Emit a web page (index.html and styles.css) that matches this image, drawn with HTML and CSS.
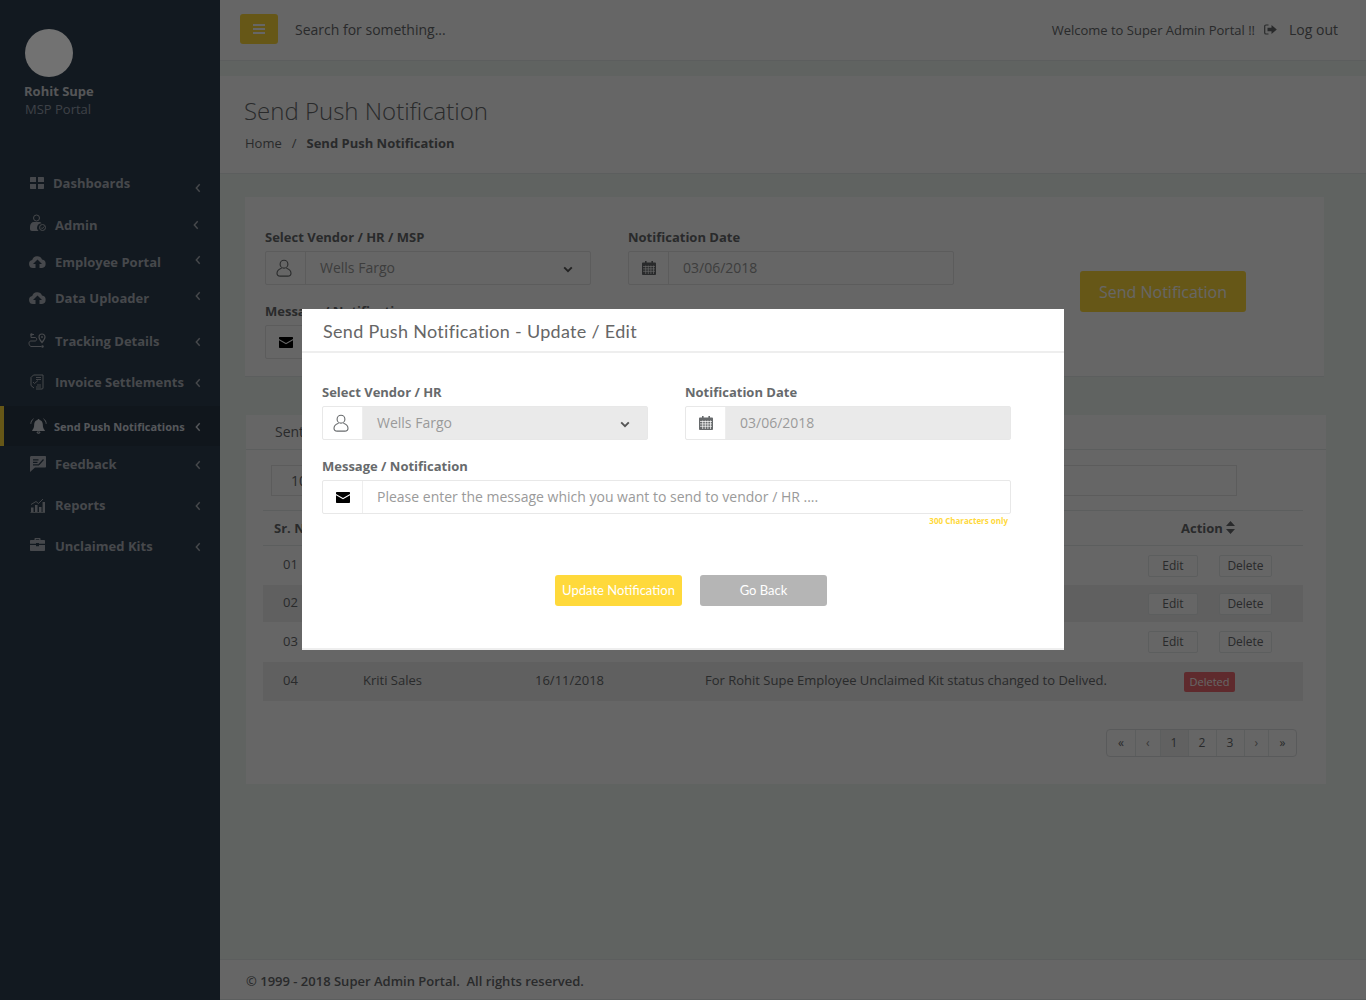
FILE: index.html
```html
<!DOCTYPE html>
<html lang="en">
<head>
  <meta charset="UTF-8">
  <title>Send Push Notification</title>
  <link rel="stylesheet" href="styles.css">
</head>
<body>

  <svg class="sprite" xmlns="http://www.w3.org/2000/svg">
    <symbol id="i-user" viewBox="0 0 16 18">
      <circle cx="8" cy="5.2" r="3.9" fill="none" stroke="currentColor" stroke-width="1.1"/>
      <path d="M5.6 9.2C2.6 10.2 1 12 1 14.2c0 1.8 1.6 2.9 3.2 2.9h7.6c1.6 0 3.2-1.1 3.2-2.9 0-2.2-1.6-4-4.6-5" fill="none" stroke="currentColor" stroke-width="1.1"/>
    </symbol>
    <symbol id="i-cal" viewBox="0 0 14 14">
      <path d="M3 0h1.6v1.6h4.8V0H11v1.6h2.2c.4 0 .8.4.8.8v10.8c0 .4-.4.8-.8.8H.8c-.4 0-.8-.4-.8-.8V2.400c0-.4.4-.8.8-.8H3z" fill="currentColor"/>
      <path d="M1 5.500h12M1 7.900h12M1 10.300h12M3.700 4.500v8.500M6.300 4.500v8.500M8.900 4.500v8.500M11.500 4.500v8.500" stroke="#fff" stroke-width=".7"/>
    </symbol>
    <symbol id="i-mail" viewBox="0 0 14 11">
      <path d="M1 0h12c.6 0 1 .4 1 1v.9L7 6 0 1.900V1c0-.6.4-1 1-1z" fill="currentColor"/>
      <path d="M0 3.200 7 7.300l7-4.100V10c0 .6-.4 1-1 1H1c-.6 0-1-.4-1-1z" fill="currentColor"/>
    </symbol>
    <symbol id="i-down" viewBox="0 0 10 7">
      <path d="M1.200 1.400 5 5.200l3.800-3.800" fill="none" stroke="currentColor" stroke-width="1.900"/>
    </symbol>
    <symbol id="i-left" viewBox="0 0 6 10">
      <path d="M4.700 1.200 1.300 5l3.400 3.800" fill="none" stroke="currentColor" stroke-width="1.400"/>
    </symbol>
    <symbol id="i-bars" viewBox="0 0 12 10">
      <path d="M0 0h12v2H0zM0 4h12v2H0zM0 8h12v2H0z" fill="currentColor"/>
    </symbol>
    <symbol id="i-logout" viewBox="0 0 13 11">
      <path d="M4.500 1H2C1.200 1 .7 1.600.7 2.300v6.400C.7 9.400 1.200 10 2 10h2.500" fill="none" stroke="currentColor" stroke-width="1.200"/>
      <path d="M3.500 3.800h4V1l5.300 4.500L7.500 10V7.200h-4z" fill="currentColor"/>
    </symbol>
    <symbol id="i-sort" viewBox="0 0 9 13">
      <path d="M4.500 0 9 5H0zM4.500 13 0 8h9z" fill="currentColor"/>
    </symbol>
    <symbol id="i-dash" viewBox="0 0 14 12">
      <path d="M0 1c0-.6.4-1 1-1h5v5H0zM8 0h5c.6 0 1 .4 1 1v4H8zM0 7h6v5H1c-.6 0-1-.4-1-1zM8 7h6v4c0 .6-.4 1-1 1H8z" fill="currentColor"/>
    </symbol>
    <symbol id="i-admin" viewBox="0 0 16 18">
      <circle cx="6.500" cy="4" r="3" fill="none" stroke="currentColor" stroke-width="1"/>
      <path d="M0 13c0-3 1.500-5 4-5h5c1 0 2 .4 2.600 1.200A4.500 4.500 0 0 0 8.500 17H2c-1.200 0-2-.8-2-2z" fill="currentColor"/>
      <circle cx="12.500" cy="13.500" r="3" fill="none" stroke="currentColor" stroke-width="1"/>
      <path d="m11 13.500 1.200 1.200 2-2.200" fill="none" stroke="currentColor" stroke-width="1"/>
    </symbol>
    <symbol id="i-cloud" viewBox="0 0 17 12">
      <path fill-rule="evenodd" d="M4 12a4 4 0 0 1-.8-7.900A5.200 5.200 0 0 1 13 3.500 4.300 4.300 0 0 1 13 12h-2.500V8H13L8.500 3.500 4 8h2.500v4z" fill="currentColor"/>
    </symbol>
    <symbol id="i-track" viewBox="0 0 18 16">
      <path d="M14 1a3 3 0 0 0-3 3c0 2 3 5.500 3 5.500S17 6 17 4a3 3 0 0 0-3-3z" fill="none" stroke="currentColor" stroke-width="1.200"/>
      <circle cx="14" cy="4" r=".9" fill="currentColor"/>
      <path d="M3 1.500h3M3 1.500v3h4c1 0 1.700.8 1.700 1.800S8 8 7 8H3c-1.300 0-2 1-2 2.300S2 13.500 3 13.500h10" fill="none" stroke="currentColor" stroke-width="1"/>
      <circle cx="14.500" cy="13.500" r="1.200" fill="currentColor"/>
      <circle cx="3.500" cy="1.500" r="1.200" fill="currentColor"/>
    </symbol>
    <symbol id="i-invoice" viewBox="0 0 14 16">
      <path d="M3.500 1h9.500v13c0 .6-.4 1-1 1H6M3.500 1 1 3.500v8L4 14" fill="none" stroke="currentColor" stroke-width="1"/>
      <path d="M6 3.500h5M6 5.500h5M3 8l1.500 1.500L8 6.500M7 11h4M6 13h5" fill="none" stroke="currentColor" stroke-width=".9"/>
    </symbol>
    <symbol id="i-bell" viewBox="0 0 17 16">
      <path d="M8.500 1c.6 0 1 .4 1 .9C11.600 2.400 12.800 4 12.800 6.500c0 3 .8 4.500 2 5.700v.8H2.200v-.8c1.200-1.200 2-2.700 2-5.700C4.200 4 5.400 2.400 7.500 1.900c0-.5.4-.9 1-.9z" fill="currentColor"/>
      <path d="M7 14h3a1.500 1.500 0 0 1-3 0zM3.500.8C1.800 2 .9 3.800.8 5.800M13.500.8c1.700 1.200 2.600 3 2.700 5" fill="none" stroke="currentColor" stroke-width=".9"/>
    </symbol>
    <symbol id="i-feedback" viewBox="0 0 16 16">
      <path d="M0 1.500C0 .7.600 0 1.400 0H15c.6 0 1 .4 1 1v9.500c0 .6-.4 1-1 1H5L0 16z" fill="currentColor"/>
      <path d="M3 3.800h5.500M3 6.300h4.500M3 8.800h6M9 8.500l4.500-5" fill="none" stroke="#2f4050" stroke-width="1.200"/>
    </symbol>
    <symbol id="i-reports" viewBox="0 0 15 15">
      <path d="M1 9.500h2.500V14H1zM5 7h2.500v7H5zM9 9h2.500v5H9zM12.600 4H15v10h-2.400z" fill="currentColor"/>
      <path d="M1 6.500 6 3.500l2.500 2L13 1" fill="none" stroke="currentColor" stroke-width=".9"/>
      <path d="M.5 14.500h14.500" stroke="currentColor" stroke-width=".8"/>
    </symbol>
    <symbol id="i-kit" viewBox="0 0 15 13">
      <path d="M4.500 2V1c0-.6.4-1 1-1h4c.6 0 1 .4 1 1v1H14c.6 0 1 .4 1 1v2.800H9V5H6v.8H0V3c0-.6.4-1 1-1zM5.800 2h3.400v-.8H5.800z" fill="currentColor"/>
      <path d="M0 7h6v1.200h3V7h6v5c0 .6-.4 1-1 1H1c-.6 0-1-.4-1-1z" fill="currentColor"/>
    </symbol>
  </svg>

  <div class="app">
    <aside class="sidebar">
      <div class="profile">
        <div class="avatar"></div>
        <div class="profile-name">Rohit Supe</div>
        <div class="profile-role">MSP Portal</div>
      </div>
      <nav class="side-nav">
        <a class="nav-item"><svg class="nav-icon dash"><use href="#i-dash"/></svg><span>Dashboards</span><svg class="chev chev-low"><use href="#i-left"/></svg></a>
        <a class="nav-item"><svg class="nav-icon admin"><use href="#i-admin"/></svg><span>Admin</span><svg class="chev chev-in"><use href="#i-left"/></svg></a>
        <a class="nav-item"><svg class="nav-icon cloud"><use href="#i-cloud"/></svg><span>Employee Portal</span><svg class="chev chev-high"><use href="#i-left"/></svg></a>
        <a class="nav-item"><svg class="nav-icon cloud"><use href="#i-cloud"/></svg><span>Data Uploader</span><svg class="chev chev-high"><use href="#i-left"/></svg></a>
        <a class="nav-item"><svg class="nav-icon track"><use href="#i-track"/></svg><span>Tracking Details</span><svg class="chev"><use href="#i-left"/></svg></a>
        <a class="nav-item"><svg class="nav-icon invoice"><use href="#i-invoice"/></svg><span>Invoice Settlements</span><svg class="chev"><use href="#i-left"/></svg></a>
        <a class="nav-item active"><svg class="nav-icon bell"><use href="#i-bell"/></svg><span>Send Push Notifications</span><svg class="chev"><use href="#i-left"/></svg></a>
        <a class="nav-item"><svg class="nav-icon feedback"><use href="#i-feedback"/></svg><span>Feedback</span><svg class="chev"><use href="#i-left"/></svg></a>
        <a class="nav-item"><svg class="nav-icon reports"><use href="#i-reports"/></svg><span>Reports</span><svg class="chev"><use href="#i-left"/></svg></a>
        <a class="nav-item"><svg class="nav-icon kit"><use href="#i-kit"/></svg><span>Unclaimed Kits</span><svg class="chev"><use href="#i-left"/></svg></a>
      </nav>
    </aside>

    <main class="main">
      <header class="topbar">
        <button class="menu-btn"><svg class="bars"><use href="#i-bars"/></svg></button>
        <span class="search">Search for something...</span>
        <span class="welcome">Welcome to Super Admin Portal !!</span>
        <svg class="logout-icon"><use href="#i-logout"/></svg>
        <a class="logout">Log out</a>
      </header>

      <section class="page-heading">
        <h2>Send Push Notification</h2>
        <div class="breadcrumb">
          <span>Home</span><span class="sep">/</span><strong>Send Push Notification</strong>
        </div>
      </section>

      <section class="card form-card">
        <div class="form-grid">
          <div class="field">
            <label>Select Vendor / HR / MSP</label>
            <div class="input-group">
              <span class="addon"><svg class="ic-user"><use href="#i-user"/></svg></span>
              <span class="control">Wells Fargo<svg class="ic-down"><use href="#i-down"/></svg></span>
            </div>
          </div>
          <div class="field">
            <label>Notification Date</label>
            <div class="input-group">
              <span class="addon"><svg class="ic-cal"><use href="#i-cal"/></svg></span>
              <span class="control">03/06/2018</span>
            </div>
          </div>
          <button class="send-btn">Send Notification</button>
          <div class="field field-wide">
            <label>Message / Notification</label>
            <div class="input-group">
              <span class="addon"><svg class="ic-mail"><use href="#i-mail"/></svg></span>
              <span class="control"></span>
            </div>
          </div>
        </div>
      </section>

      <section class="card list-card">
        <div class="list-title">Sent Items</div>
        <div class="list-filters">
          <span class="page-size">10</span>
          <span class="filter-search"></span>
        </div>
        <table class="list-table">
          <thead>
            <tr><th>Sr. No</th><th></th><th></th><th></th><th class="action-head">Action <svg class="ic-sort"><use href="#i-sort"/></svg></th></tr>
          </thead>
          <tbody>
            <tr>
              <td>01</td><td></td><td></td><td></td>
              <td class="actions"><a class="btn-sm">Edit</a><a class="btn-sm">Delete</a></td>
            </tr>
            <tr>
              <td>02</td><td></td><td></td><td></td>
              <td class="actions"><a class="btn-sm">Edit</a><a class="btn-sm">Delete</a></td>
            </tr>
            <tr>
              <td>03</td><td></td><td></td><td></td>
              <td class="actions"><a class="btn-sm">Edit</a><a class="btn-sm">Delete</a></td>
            </tr>
            <tr>
              <td>04</td><td>Kriti Sales</td><td>16/11/2018</td>
              <td>For Rohit Supe Employee Unclaimed Kit status changed to Delived.</td>
              <td class="actions"><span class="badge-deleted">Deleted</span></td>
            </tr>
          </tbody>
        </table>
        <div class="pager-wrap">
          <div class="pager">
            <a class="wide">«</a><a class="narrow">‹</a><a class="wide current">1</a><a class="wide">2</a><a class="wide">3</a><a class="narrow">›</a><a class="wide">»</a>
          </div>
        </div>
      </section>

      <footer class="footer">© 1999 - 2018 Super Admin Portal.&nbsp; All rights reserved.</footer>
    </main>
  </div>

  <!-- Update dialog, open over the dimmed page -->
  <div class="backdrop">
    <div class="modal">
      <div class="modal-head">Send Push Notification - Update / Edit</div>
      <div class="modal-body">
        <div class="modal-grid">
          <div class="field">
            <label>Select Vendor / HR</label>
            <div class="input-group">
              <span class="addon"><svg class="ic-user"><use href="#i-user"/></svg></span>
              <span class="control disabled">Wells Fargo<svg class="ic-down"><use href="#i-down"/></svg></span>
            </div>
          </div>
          <div class="field">
            <label>Notification Date</label>
            <div class="input-group">
              <span class="addon"><svg class="ic-cal"><use href="#i-cal"/></svg></span>
              <span class="control disabled">03/06/2018</span>
            </div>
          </div>
          <div class="field field-wide">
            <label>Message / Notification</label>
            <div class="input-group">
              <span class="addon"><svg class="ic-mail"><use href="#i-mail"/></svg></span>
              <span class="control">Please enter the message which you want to send to vendor / HR ....</span>
            </div>
            <div class="char-hint">300 Characters only</div>
          </div>
        </div>
        <div class="modal-actions">
          <button class="modal-btn primary">Update Notification</button>
          <button class="modal-btn muted">Go Back</button>
        </div>
      </div>
    </div>
  </div>

</body>
</html>
```

FILE: styles.css
```css
* {
  box-sizing: border-box;
}
body {
  margin: 0;
  font-family: "Open Sans", "Noto Sans", sans-serif;
  font-size: 13px;
  color: #676a6c;
  background-color: #f0f7f3;
  overflow: hidden;
}
.sprite {
  display: none;
}
svg {
  display: block;
}
.app {
  display: flex;
  height: 1000px;
}

/* Sidebar */
.sidebar {
  width: 220px;
  flex-shrink: 0;
  background-color: #2f4050;
  color: #b0b5bd;
}
.profile {
  height: 162px;
  padding: 29px 0 0 25px;
}
/* the picture sits a little above the dimming layer */
.avatar {
  width: 48px;
  height: 48px;
  border-radius: 50%;
  background-color: #727272;
  position: relative;
  z-index: 20;
}
.profile-name {
  margin-top: 5px;
  font-size: 13px;
  line-height: 18px;
  font-weight: 700;
  color: #d5d7db;
  margin-left: -1px;
}
.profile-role {
  font-size: 13px;
  line-height: 18px;
  color: #9aa3b2;
}
.side-nav {
  display: grid;
  grid-template-rows: 42px 42px 32px 40px 46px 36px 46px 36px 46px 36px;
}
.nav-item {
  display: flex;
  align-items: center;
  padding-left: 30px;
  font-weight: 700;
  font-size: 13px;
}
.nav-item span {
  flex: 1;
  white-space: nowrap;
}
.nav-item.active {
  margin-top: 6px;
  background-color: #293846;
  border-left: 4px solid #ffd93b;
  padding-left: 26px;
  font-size: 11px;
  color: #d5dae2;
}
.nav-icon {
  flex-shrink: 0;
  margin-right: 10px;
}
.nav-icon.dash { width: 14px; height: 12px; margin-right: 9px; }
.nav-icon.admin { width: 16px; height: 18px; margin-right: 9px; margin-top: -4px; }
.nav-icon.cloud { width: 17px; height: 12px; margin-left: -1px; margin-right: 9px; }
.nav-icon.track { width: 18px; height: 16px; margin-left: -2px; margin-right: 9px; }
.nav-icon.invoice { width: 14px; height: 16px; margin-right: 11px; }
.nav-icon.bell { width: 17px; height: 16px; margin-right: 7px; }
.nav-icon.feedback { width: 16px; height: 16px; margin-right: 9px; }
.nav-icon.reports { width: 15px; height: 15px; margin-right: 10px; }
.nav-icon.kit { width: 15px; height: 13px; margin-right: 10px; margin-top: -3px; }
.chev {
  width: 6px;
  height: 10px;
  margin-right: 19px;
  flex-shrink: 0;
  margin-top: 2px;
}
.chev-low { margin-top: 10px; }
.chev-high { margin-top: -4px; }
.chev-in { margin-right: 21px; margin-top: 0; }

/* Top bar */
.main {
  flex: 1;
  min-width: 0;
  display: flex;
  flex-direction: column;
}
.topbar {
  height: 61px;
  flex-shrink: 0;
  display: flex;
  align-items: center;
  padding: 0 28px 2px 20px;
  background-color: #fff;
  border-bottom: 1px solid #e7eaec;
}
.menu-btn {
  width: 38px;
  height: 30px;
  border: none;
  border-radius: 3px;
  background-color: #ffd93b;
  color: #fff;
  display: flex;
  align-items: center;
  justify-content: center;
  padding: 0;
}
.bars {
  width: 12px;
  height: 10px;
}
.search {
  margin-left: 17px;
  font-size: 14px;
  flex: 1;
}
.welcome {
  font-size: 13px;
  margin-top: 1px;
}
.logout-icon {
  width: 13px;
  height: 11px;
  margin-left: 9px;
}
.logout {
  margin-left: 12px;
  font-size: 14px;
}

/* Page heading */
.page-heading {
  margin-top: 15px;
  height: 98px;
  flex-shrink: 0;
  padding: 19px 24px 0;
  background-color: #fff;
  border-bottom: 1px solid #e7eaec;
}
.page-heading h2 {
  margin: 0;
  font-size: 24px;
  line-height: 32px;
  font-weight: 300;
}
.breadcrumb {
  margin-top: 7px;
  margin-left: 1px;
  line-height: 18px;
}
.breadcrumb .sep {
  margin: 0 10px;
}

/* Cards */
.card {
  background-color: #fff;
  flex-shrink: 0;
}
.form-card {
  margin: 23px 42px 0 25px;
  height: 180px;
  padding: 31px 20px 0;
  border-bottom: 1px solid #e7eaec;
}
.form-grid {
  display: grid;
  grid-template-columns: 326px 326px auto;
  column-gap: 37px;
  row-gap: 17px;
}
.field-wide {
  grid-column: 1 / span 2;
}
.field label {
  display: block;
  font-weight: 700;
  font-size: 13px;
  line-height: 18px;
  margin-bottom: 5px;
}
.input-group {
  display: flex;
  height: 34px;
  border: 1px solid #e5e6e7;
  border-radius: 2px;
}
.addon {
  width: 40px;
  flex-shrink: 0;
  display: flex;
  align-items: center;
  justify-content: center;
  border-right: 1px solid #e5e6e7;
  color: #676a6c;
}
.control {
  flex: 1;
  display: flex;
  align-items: center;
  justify-content: space-between;
  padding: 0 17px 2px 14px;
  font-size: 14px;
  color: #9a9a9a;
  white-space: nowrap;
}
.control.disabled {
  background-color: #eaeaea;
}
.ic-user { width: 16px; height: 18px; margin-right: 3px; }
.ic-cal { width: 14px; height: 14px; }
.ic-mail { width: 14px; height: 11px; color: #000; }
.ic-down { width: 10px; height: 7px; color: #555; margin-top: 4px; }
.send-btn {
  grid-column: 3;
  grid-row: 1 / span 2;
  justify-self: start;
  align-self: start;
  margin: 43px 0 0 89px;
  width: 166px;
  height: 41px;
  border: none;
  border-radius: 3px;
  background-color: #ffd93b;
  color: #ffffff;
  font-family: inherit;
  font-size: 16px;
}
.list-card {
  margin: 38px 40px 0 26px;
  height: 369px;
}
.list-title {
  height: 35px;
  padding: 0 29px;
  line-height: 34px;
  font-size: 14px;
  border-bottom: 1px solid #e7eaec;
}
.list-filters {
  display: flex;
  justify-content: space-between;
  margin: 15px 89px 0 25px;
  height: 31px;
}
.page-size {
  width: 60px;
  border: 1px solid #e5e6e7;
  padding-left: 19px;
  font-size: 14px;
  line-height: 29px;
}
.filter-search {
  width: 400px;
  border: 1px solid #e5e6e7;
}

/* Table */
.list-table {
  margin: 14px 0 0 17px;
  width: 1040px;
  table-layout: fixed;
  border-collapse: collapse;
}
.list-table th:nth-child(1) { width: 80px; }
.list-table th:nth-child(2) { width: 172px; }
.list-table th:nth-child(3) { width: 170px; }
.list-table th:nth-child(4) { width: 440px; }
.list-table th {
  height: 35px;
  text-align: left;
  padding: 0 0 0 11px;
  font-size: 13px;
  white-space: nowrap;
  border-top: 1px solid #e7eaec;
  border-bottom: 1px solid #e7eaec;
}
.list-table th.action-head {
  padding-left: 56px;
}
.ic-sort {
  display: inline-block;
  width: 9px;
  height: 13px;
  vertical-align: -1px;
}
.list-table td {
  height: 39px;
  padding: 0 0 2px 20px;
  font-size: 13px;
  white-space: nowrap;
}
.list-table tbody tr:nth-child(2) td {
  height: 37px;
}
.list-table tbody tr:nth-child(3) td {
  height: 40px;
}
.list-table tbody tr:nth-child(even) {
  background-color: #efefef;
}
.list-table td.actions {
  padding-left: 23px;
}
.btn-sm {
  display: inline-block;
  height: 22px;
  width: 50px;
  margin-right: 21px;
  margin-top: 3px;
  line-height: 20px;
  text-align: center;
  font-size: 12px;
  border: 1px solid #e7eaec;
  border-radius: 2px;
  background-color: #fff;
  vertical-align: middle;
}
.btn-sm + .btn-sm {
  width: 53px;
  margin-right: 0;
}
.badge-deleted {
  display: inline-block;
  margin-left: 36px;
  margin-top: 3px;
  width: 51px;
  height: 20px;
  line-height: 20px;
  text-align: center;
  font-size: 11px;
  border-radius: 2px;
  background-color: #ed6a70;
  color: #ffffff;
  vertical-align: middle;
}
.pager-wrap {
  display: flex;
  justify-content: flex-end;
  margin: 28px 29px 0 0;
}
.pager {
  display: flex;
  height: 28px;
  border: 1px solid #dfe1e3;
  border-radius: 4px;
}
.pager a {
  display: flex;
  align-items: center;
  justify-content: center;
  font-size: 12px;
  border-left: 1px solid #e7eaec;
}
.pager a:first-child {
  border-left: none;
}
.pager .wide { width: 28px; }
.pager .narrow { width: 24.5px; color: #8c8c8c; }
.pager .current { background-color: #f3f3f3; }

/* Footer */
.footer {
  margin-top: auto;
  height: 41px;
  flex-shrink: 0;
  padding: 0 26px;
  line-height: 42px;
  font-size: 13px;
  font-weight: 600;
  background-color: #fff;
  border-top: 1px solid #e7eaec;
  border-bottom: 1px solid #e7eaec;
}

/* Dialog */
.backdrop {
  position: fixed;
  inset: 0;
  z-index: 10;
  background-color: rgba(0, 0, 0, .6);
}
.modal {
  width: 762px;
  height: 341px;
  margin: 309px auto 0;
  background-color: #fff;
  border-bottom: 2px solid #eeeeee;
}
.modal-head {
  height: 44px;
  padding: 0 21px;
  line-height: 44px;
  font-family: Lato, "Noto Sans", sans-serif;
  font-size: 18px;
  letter-spacing: .3px;
  color: #666666;
  border-bottom: 2px solid #eeeeee;
}
.modal-body {
  padding: 30px 20px 0;
}
.modal-grid {
  display: grid;
  grid-template-columns: 326px 326px;
  column-gap: 37px;
  row-gap: 17px;
}
.modal .addon {
  border-right: 1px solid #eeeeee;
}
.modal .input-group {
  border-color: #e8e8e8;
}
.char-hint {
  margin: 2px 3px 0 0;
  text-align: right;
  font-size: 8px;
  line-height: 10px;
  font-weight: 700;
  color: #ffd93b;
}
.modal-actions {
  display: flex;
  justify-content: center;
  gap: 18px;
  margin-top: 49px;
  margin-left: 16px;
}
.modal-btn {
  width: 127px;
  height: 31px;
  border: none;
  border-radius: 3px;
  padding: 0 0 1px;
  font-family: Lato, "Noto Sans", sans-serif;
  font-size: 13px;
  color: #fff;
}
.modal-btn.primary {
  background-color: #ffd93b;
}
.modal-btn.muted {
  background-color: #b5b5b5;
}
```
